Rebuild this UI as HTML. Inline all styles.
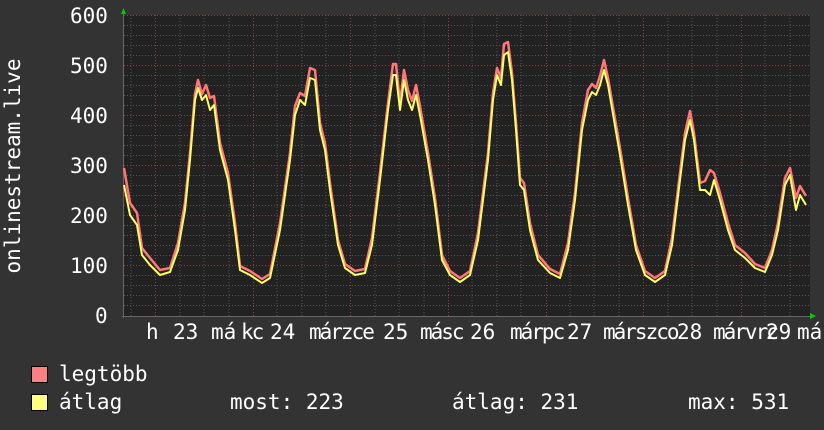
<!DOCTYPE html>
<html><head><meta charset="utf-8"><style>
html,body{margin:0;padding:0;background:#333333;}
body{width:824px;height:430px;overflow:hidden;position:relative;font-family:"DejaVu Sans Mono","Liberation Mono",monospace;color:#fff;}
.t{position:absolute;font-size:21px;line-height:21px;white-space:pre;}
.x{letter-spacing:-2px;}
.box{position:absolute;width:15px;height:15px;border:1px solid #000;}
</style></head><body>
<svg width="824" height="430" style="position:absolute;left:0;top:0">
<rect x="124" y="15" width="686" height="301" fill="#222222"/>
<g stroke="#555" stroke-width="1" stroke-dasharray="1,2">
<line x1="124" x2="810" y1="25.5" y2="25.5"/><line x1="124" x2="810" y1="35.5" y2="35.5"/><line x1="124" x2="810" y1="45.5" y2="45.5"/><line x1="124" x2="810" y1="55.5" y2="55.5"/>
<line x1="124" x2="810" y1="75.5" y2="75.5"/><line x1="124" x2="810" y1="85.5" y2="85.5"/><line x1="124" x2="810" y1="95.5" y2="95.5"/><line x1="124" x2="810" y1="105.5" y2="105.5"/>
<line x1="124" x2="810" y1="125.5" y2="125.5"/><line x1="124" x2="810" y1="135.5" y2="135.5"/><line x1="124" x2="810" y1="145.5" y2="145.5"/><line x1="124" x2="810" y1="155.5" y2="155.5"/>
<line x1="124" x2="810" y1="175.5" y2="175.5"/><line x1="124" x2="810" y1="185.5" y2="185.5"/><line x1="124" x2="810" y1="195.5" y2="195.5"/><line x1="124" x2="810" y1="205.5" y2="205.5"/>
<line x1="124" x2="810" y1="225.5" y2="225.5"/><line x1="124" x2="810" y1="235.5" y2="235.5"/><line x1="124" x2="810" y1="245.5" y2="245.5"/><line x1="124" x2="810" y1="255.5" y2="255.5"/>
<line x1="124" x2="810" y1="275.5" y2="275.5"/><line x1="124" x2="810" y1="285.5" y2="285.5"/><line x1="124" x2="810" y1="295.5" y2="295.5"/><line x1="124" x2="810" y1="305.5" y2="305.5"/>
<line y1="15" y2="316" x1="131" x2="131"/><line y1="15" y2="316" x1="180" x2="180"/><line y1="15" y2="316" x1="204" x2="204"/><line y1="15" y2="316" x1="229" x2="229"/>
<line y1="15" y2="316" x1="277" x2="277"/><line y1="15" y2="316" x1="302" x2="302"/><line y1="15" y2="316" x1="326" x2="326"/>
<line y1="15" y2="316" x1="375" x2="375"/><line y1="15" y2="316" x1="399" x2="399"/><line y1="15" y2="316" x1="424" x2="424"/>
<line y1="15" y2="316" x1="472" x2="472"/><line y1="15" y2="316" x1="497" x2="497"/><line y1="15" y2="316" x1="521" x2="521"/>
<line y1="15" y2="316" x1="570" x2="570"/><line y1="15" y2="316" x1="594" x2="594"/><line y1="15" y2="316" x1="619" x2="619"/>
<line y1="15" y2="316" x1="668" x2="668"/><line y1="15" y2="316" x1="692" x2="692"/><line y1="15" y2="316" x1="717" x2="717"/>
<line y1="15" y2="316" x1="765" x2="765"/><line y1="15" y2="316" x1="790" x2="790"/>
</g>
<g stroke="#884444" stroke-width="1" stroke-dasharray="1,2">
<line x1="124" x2="810" y1="15.5" y2="15.5"/><line x1="124" x2="810" y1="65.5" y2="65.5"/><line x1="124" x2="810" y1="115.5" y2="115.5"/><line x1="124" x2="810" y1="165.5" y2="165.5"/><line x1="124" x2="810" y1="215.5" y2="215.5"/><line x1="124" x2="810" y1="265.5" y2="265.5"/>
<line y1="15" y2="316" x1="155.5" x2="155.5"/><line y1="15" y2="316" x1="253.5" x2="253.5"/><line y1="15" y2="316" x1="350.5" x2="350.5"/><line y1="15" y2="316" x1="448.5" x2="448.5"/><line y1="15" y2="316" x1="546.5" x2="546.5"/><line y1="15" y2="316" x1="643.5" x2="643.5"/><line y1="15" y2="316" x1="741.5" x2="741.5"/>
</g>
<line x1="122" x2="815" y1="316.5" y2="316.5" stroke="#666"/>
<line x1="123.5" x2="123.5" y1="10" y2="318" stroke="#666"/>
<polygon points="121,14 126,14 123.5,8" fill="#00cc00"/>
<polygon points="810,313 810,319 816,316" fill="#00cc00"/>
<g fill="none" stroke-linejoin="round">
<polyline stroke="#ff7777" stroke-width="2.5" transform="translate(0,-2)" points="124,170 130,205 137,215 142,250 150,260 160,272 170,270 178,245 185,205 190,155 195,96 198,82 202,96 206,87 210,100 214,98 220,145 228,175 235,225 240,268 250,273 262,281 270,276 280,225 290,155 295,108 300,95 305,98 310,70 315,72 320,125 325,145 330,185 338,242 345,266 355,273 365,271 372,240 380,175 388,105 393,66 396,66 400,105 404,72 408,92 412,103 416,87 420,108 428,155 435,200 442,257 450,273 460,280 470,273 478,235 488,155 493,95 497,70 501,80 504,46 508,44 512,75 516,125 520,180 524,185 530,225 538,257 550,271 560,276 568,245 575,195 582,125 588,92 592,86 596,90 600,78 604,62 608,80 614,115 620,150 628,200 636,247 645,273 655,280 665,273 672,240 680,175 685,135 690,113 694,135 700,185 705,183 710,172 714,175 720,195 728,225 735,247 745,255 755,266 765,270 772,252 778,225 785,180 790,170 796,200 800,188 806,198"/>
<polyline stroke="#ffff66" stroke-width="2" points="124,185 130,215 137,225 142,255 150,265 160,275 170,272 178,250 185,210 190,160 195,100 198,88 202,100 206,95 210,110 214,105 220,150 228,180 235,230 240,270 250,275 262,283 270,278 280,230 290,160 295,115 300,100 305,105 310,78 315,80 320,130 325,150 330,190 338,245 345,268 355,275 365,273 372,245 380,180 388,110 393,75 396,75 400,110 404,80 408,100 412,110 416,95 420,115 428,160 435,205 442,260 450,275 460,282 470,275 478,240 488,160 493,100 497,75 501,85 504,55 508,52 512,80 516,130 520,185 524,190 530,230 538,260 550,273 560,278 568,250 575,200 582,130 588,100 592,92 596,95 600,85 604,70 608,85 614,120 620,155 628,205 636,250 645,275 655,282 665,275 672,245 680,180 685,140 690,120 694,140 700,190 705,190 710,195 714,180 720,200 728,230 735,250 745,258 755,268 765,272 772,255 778,230 785,185 790,175 796,210 800,195 806,205"/>
</g>
<text x="14" y="166" fill="#fff" font-family="DejaVu Sans Mono, monospace" font-size="21" text-anchor="middle" transform="rotate(-90 14 166)" dominant-baseline="middle">onlinestream.live</text>
</svg>
<div class="t" style="left:70px;top:6px">600</div>
<div class="t" style="left:70px;top:56px">500</div>
<div class="t" style="left:70px;top:106px">400</div>
<div class="t" style="left:70px;top:156px">300</div>
<div class="t" style="left:70px;top:206px">200</div>
<div class="t" style="left:70px;top:256px">100</div>
<div class="t" style="left:95px;top:306px">0</div>
<div class="t" style="left:146px;top:322px">h</div>
<div class="t" style="left:173px;top:322px">23</div>
<div class="t" style="left:211px;top:322px">má</div>
<div class="t x" style="left:241px;top:322px">kc</div>
<div class="t" style="left:270px;top:322px">24</div>
<div class="t x" style="left:309px;top:322px">márzce</div>
<div class="t" style="left:383px;top:322px">25</div>
<div class="t x" style="left:420px;top:322px">másc</div>
<div class="t" style="left:470px;top:322px">26</div>
<div class="t x" style="left:510px;top:322px">márpc</div>
<div class="t" style="left:567px;top:322px">27</div>
<div class="t x" style="left:603px;top:322px">márszco</div>
<div class="t" style="left:677px;top:322px">28</div>
<div class="t x" style="left:713px;top:322px">márvrc</div>
<div class="t" style="left:766px;top:322px">29</div>
<div class="t" style="left:797px;top:322px">má</div>
<div class="box" style="left:31px;top:366px;background:#ff8080"></div>
<div class="box" style="left:31px;top:394px;background:#ffff80"></div>
<div class="t" style="left:59px;top:364px">legtöbb</div>
<div class="t" style="left:59px;top:392px">átlag</div>
<div class="t" style="left:230px;top:392px">most: 223</div>
<div class="t" style="left:452px;top:392px">átlag: 231</div>
<div class="t" style="left:688px;top:392px">max: 531</div>
</body></html>
